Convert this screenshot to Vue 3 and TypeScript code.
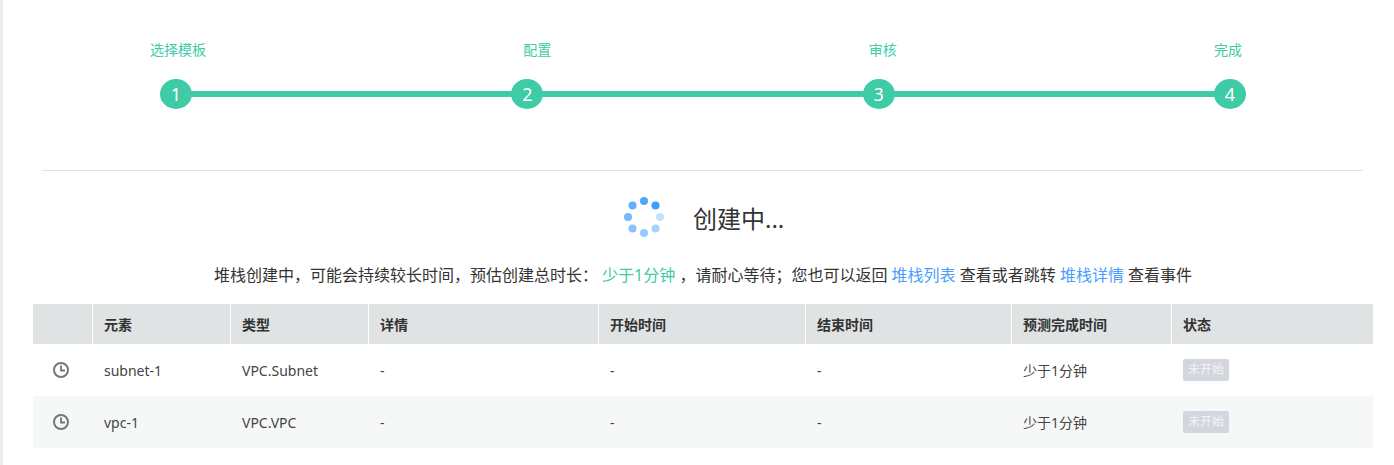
<template>
  <div class="page">
    <div class="steps">
      <div class="step-labels">
        <span v-for="s in steps" :key="s" class="step-label">{{ s }}</span>
      </div>
      <div class="step-track">
        <template v-for="(s, i) in steps" :key="s">
          <span class="step-dot">{{ i + 1 }}</span>
          <span v-if="i < steps.length - 1" class="step-line"></span>
        </template>
      </div>
    </div>

    <div class="divider"></div>

    <div class="title-row">
      <svg class="spinner" width="40" height="40" viewBox="0 0 40 40">
        <circle v-for="d in dots" :key="d.color" :cx="d.x" :cy="d.y" r="4" :fill="d.color" />
      </svg>
      <span class="title">创建中...</span>
    </div>

    <p class="hint">
      堆栈创建中，可能会持续较长时间，预估创建总时长：
      <span class="green">少于1分钟</span>
      ，请耐心等待；您也可以返回
      <a class="link">堆栈列表</a>
      查看或者跳转
      <a class="link">堆栈详情</a>
      查看事件
    </p>

    <table class="grid">
      <colgroup>
        <col v-for="w in widths" :key="w.id" :style="{ width: w.px + 'px' }" />
      </colgroup>
      <thead>
        <tr>
          <th v-for="h in headers" :key="h.id">{{ h.label }}</th>
        </tr>
      </thead>
      <tbody>
        <tr v-for="row in rows" :key="row.name">
          <td class="icon-cell">
            <svg width="18" height="18" viewBox="0 0 18 18" fill="none" stroke="#75757c">
              <circle cx="9" cy="9" r="7" stroke-width="2" />
              <path d="M9 4.5V9.5H13" stroke-width="1.8" />
            </svg>
          </td>
          <td>{{ row.name }}</td>
          <td>{{ row.type }}</td>
          <td>-</td>
          <td>-</td>
          <td>-</td>
          <td>少于1分钟</td>
          <td><span class="badge">未开始</span></td>
        </tr>
      </tbody>
    </table>
  </div>
</template>

<script setup lang="ts">
const steps: string[] = ['选择模板', '配置', '审核', '完成']

const dots = [
  { x: 20, y: 4, color: '#4ba6ff' },
  { x: 31.5, y: 8.5, color: '#3d9eff' },
  { x: 36, y: 20, color: '#c4e1ff' },
  { x: 31.5, y: 31.5, color: '#a6d1ff' },
  { x: 20, y: 36, color: '#96c9ff' },
  { x: 8.5, y: 31.5, color: '#8ac2ff' },
  { x: 4, y: 20, color: '#78b8ff' },
  { x: 8.5, y: 8.5, color: '#62aeff' },
]

const widths = [60, 138, 138, 230, 207, 206, 160, 201].map((px, id) => ({ id, px }))

const headers = ['', '元素', '类型', '详情', '开始时间', '结束时间', '预测完成时间', '状态'].map(
  (label, id) => ({ id, label }),
)

const rows = [
  { name: 'subnet-1', type: 'VPC.Subnet' },
  { name: 'vpc-1', type: 'VPC.VPC' },
]
</script>

<style scoped>
.page {
  box-sizing: border-box;
  width: 1394px;
  height: 465px;
  border-left: 3px solid #ededed;
  padding-left: 30px;
  padding-right: 21px;
  font-family: "Noto Sans", "Noto Sans CJK SC", sans-serif;
  font-size: 14px;
  color: #333;
  overflow: hidden;
}

.steps {
  padding-top: 40px;
}

.step-labels {
  display: flex;
  justify-content: space-between;
  padding: 0 131px 0 117px;
  height: 20px;
  line-height: 20px;
}

.step-label {
  color: #3ecba5;
  font-size: 14px;
}

.step-track {
  display: flex;
  align-items: center;
  margin-top: 19px;
  padding: 0 127px;
}

.step-dot {
  flex: none;
  width: 32px;
  height: 30px;
  border-radius: 50%;
  background: #3ecba5;
  color: #fff;
  font-size: 18px;
  line-height: 30px;
  text-align: center;
}

.step-line {
  flex: 1;
  height: 6px;
  margin: 0 -2px;
  background: #3ecba5;
}

.divider {
  height: 1px;
  margin: 61px 10px 0 9px;
  background: #e2e2e2;
}

.title-row {
  display: flex;
  align-items: center;
  justify-content: center;
  gap: 29px;
  margin-top: 26px;
  height: 40px;
}

.title {
  font-size: 24px;
  color: #333;
  width: 89px;
  white-space: nowrap;
}

.hint {
  margin: 23px 0 0;
  height: 30px;
  line-height: 30px;
  font-size: 16px;
  text-align: center;
  white-space: nowrap;
  color: #333;
}

.green {
  color: #3ecba5;
}

.link {
  color: #4a9dff;
}

.grid {
  width: 1340px;
  margin-top: 14px;
  border-collapse: separate;
  border-spacing: 0;
  table-layout: fixed;
}

.grid th {
  height: 40px;
  padding: 0 0 0 11px;
  background: #e0e3e4;
  border-right: 1px solid #fff;
  text-align: left;
  font-size: 14px;
  font-weight: 700;
  color: #333;
}

.grid th:last-child {
  border-right: 0;
}

.grid td {
  height: 52px;
  padding: 0 0 0 11px;
  font-size: 14px;
  color: #444;
}

.grid tbody tr:nth-child(2) td {
  background: #f6f8f8;
}

.grid td.icon-cell {
  padding: 0 0 0 19px;
}

.icon-cell svg {
  display: block;
}

.badge {
  display: inline-block;
  width: 46px;
  height: 22px;
  line-height: 22px;
  border-radius: 2px;
  background: #d3d6de;
  color: #f3f4f6;
  font-size: 12px;
  text-align: center;
  vertical-align: middle;
}
</style>

<style>
html,
body {
  background: #fff;
  overflow: hidden;
}
</style>
